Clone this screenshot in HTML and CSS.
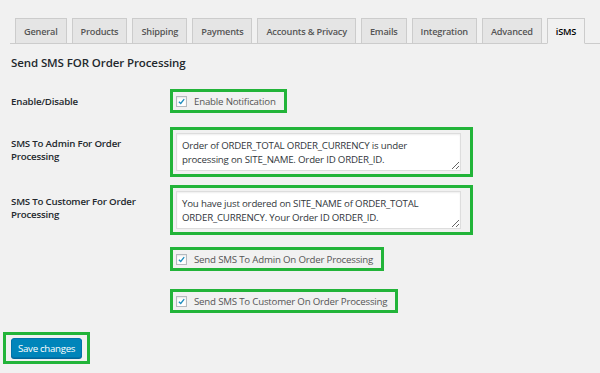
FILE: index.html
```html
<!DOCTYPE html>
<html lang="en">

<head>
  <meta charset="UTF-8" />
  <meta name="viewport" content="width=device-width, initial-scale=1.0" />
  <link rel="stylesheet" href="styles.css">
</head>

<body>
  <div class="wrap">
    <nav class="tabs">
      <a class="tab">General</a>
      <a class="tab">Products</a>
      <a class="tab">Shipping</a>
      <a class="tab">Payments</a>
      <a class="tab">Accounts &amp; Privacy</a>
      <a class="tab">Emails</a>
      <a class="tab">Integration</a>
      <a class="tab">Advanced</a>
      <a class="tab active">iSMS</a>
    </nav>

    <h2 class="heading">Send SMS FOR Order Processing</h2>

    <div class="row row-enable">
      <div class="label">Enable/Disable</div>
      <div class="field">
        <label class="mark check">
          <span class="box"><svg viewBox="0 0 12 12" width="11" height="11"><path d="M2.5 6.2 L5 8.6 L9.6 2.8" fill="none" stroke="#1e8cbe" stroke-width="1.8" /></svg></span>
          Enable Notification
        </label>
      </div>
    </div>

    <div class="row row-admin">
      <div class="label label-top">SMS To Admin For Order Processing</div>
      <div class="field">
        <div class="mark area">
          <textarea>Order of ORDER_TOTAL ORDER_CURRENCY is under processing on SITE_NAME. Order ID ORDER_ID.</textarea>
        </div>
      </div>
    </div>

    <div class="row row-customer">
      <div class="label label-top">SMS To Customer For Order Processing</div>
      <div class="field">
        <div class="mark area">
          <textarea>You have just ordered on SITE_NAME of ORDER_TOTAL ORDER_CURRENCY. Your Order ID ORDER_ID.</textarea>
        </div>
      </div>
    </div>

    <div class="row row-send-admin">
      <div class="label"></div>
      <div class="field">
        <label class="mark check">
          <span class="box"><svg viewBox="0 0 12 12" width="11" height="11"><path d="M2.5 6.2 L5 8.6 L9.6 2.8" fill="none" stroke="#1e8cbe" stroke-width="1.8" /></svg></span>
          Send SMS To Admin On Order Processing
        </label>
      </div>
    </div>

    <div class="row row-send-customer">
      <div class="label"></div>
      <div class="field">
        <label class="mark check">
          <span class="box"><svg viewBox="0 0 12 12" width="11" height="11"><path d="M2.5 6.2 L5 8.6 L9.6 2.8" fill="none" stroke="#1e8cbe" stroke-width="1.8" /></svg></span>
          Send SMS To Customer On Order Processing
        </label>
      </div>
    </div>

    <div class="submit">
      <div class="mark save">
        <button class="button">Save changes</button>
      </div>
    </div>
  </div>
</body>

</html>
```

FILE: styles.css
```css
body {
  margin: 0;
  background-color: #f1f1f1;
  font-family: "Open Sans", "Noto Sans", sans-serif;
  font-size: 9.7px;
  letter-spacing: -0.2px;
  color: #444;
}

.wrap {
  padding: 0 0 0 3px;
}

.tabs {
  display: flex;
  margin: 18px 0 0 7px;
  border-bottom: 1px solid #ccc;
}

.tab {
  display: block;
  height: 24px;
  line-height: 25px;
  padding: 0 8px;
  margin-left: 5px;
  margin-bottom: -1px;
  background-color: #e5e5e5;
  border: 1px solid #ccc;
  border-bottom: none;
  color: #555;
  font-size: 9.2px;
  font-weight: 600;
  white-space: nowrap;
}

.tab.active {
  background-color: #f1f1f1;
  border-bottom: 1px solid #f1f1f1;
  color: #000;
}

.heading {
  margin: 10px 0 0 8px;
  font-size: 11.5px;
  letter-spacing: -0.1px;
  font-weight: 600;
  color: #23282d;
  line-height: 18px;
}

.row {
  display: flex;
  align-items: center;
}

.row-enable {
  margin-top: 17px;
}

.row-admin {
  margin-top: 14px;
  align-items: flex-start;
}

.row-customer {
  margin-top: 8px;
  align-items: flex-start;
}

.row-send-admin {
  margin-top: 12px;
}

.row-send-customer {
  margin-top: 18px;
}

.label {
  width: 167px;
  flex-shrink: 0;
  padding-left: 8px;
  box-sizing: border-box;
  font-weight: 600;
  color: #23282d;
  line-height: 13px;
}

.label-top {
  padding-top: 10px;
  padding-right: 20px;
}

.mark {
  border: 3px solid #22b439;
}

.check {
  display: inline-flex;
  align-items: center;
  height: 18px;
  padding: 0 8px 0 3px;
  color: #555;
}

.box {
  display: inline-flex;
  width: 11px;
  height: 11px;
  margin-right: 7px;
  background-color: #fff;
  border: 1px solid #b4b9be;
  box-sizing: border-box;
  align-items: center;
  justify-content: center;
  box-shadow: inset 0 1px 2px rgba(0, 0, 0, 0.1);
}

.area {
  width: 291px;
  padding: 3px;
}

.area textarea {
  display: block;
  box-sizing: border-box;
  width: 285px;
  height: 38px;
  padding: 5px 5px;
  margin: 0;
  border: 1px solid #ddd;
  background-color: #fff;
  font-family: inherit;
  font-size: 9.7px;
  letter-spacing: -0.2px;
  line-height: 14px;
  color: #32373c;
  resize: vertical;
  box-shadow: inset 0 1px 2px rgba(0, 0, 0, 0.07);
  overflow: hidden;
}

.submit {
  margin-top: 19px;
}

.save {
  display: inline-block;
  padding: 3px 5px;
}

.button {
  display: block;
  height: 20px;
  padding: 0 6px;
  background-color: #0085ba;
  border: 1px solid #0073aa;
  border-radius: 3px;
  box-shadow: 0 1px 0 #006799;
  color: #fff;
  font-family: inherit;
  font-size: 9.7px;
  letter-spacing: -0.3px;
}
```
